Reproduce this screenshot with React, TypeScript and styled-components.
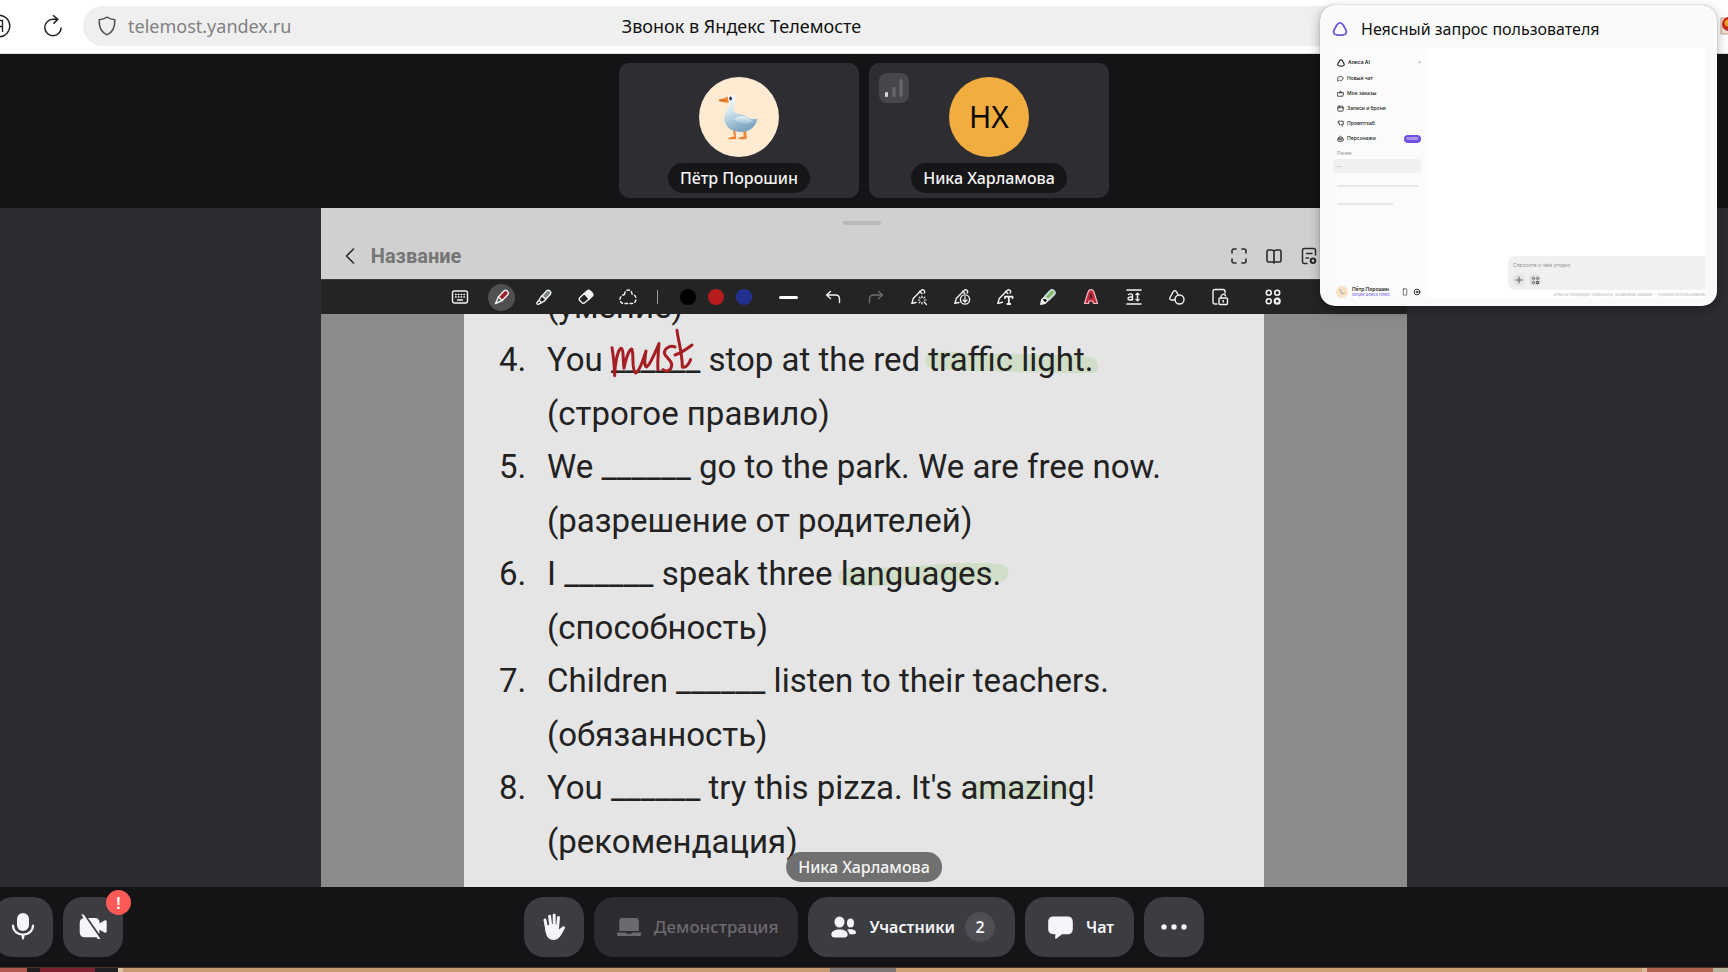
import React from "react";
import styled, { createGlobalStyle, css } from "styled-components";

const UI_FONT = '"Noto Sans", "Open Sans", sans-serif';
const DOC_FONT = 'Roboto, "Noto Sans", sans-serif';

const GlobalStyle = createGlobalStyle`
  *, *::before, *::after { box-sizing: border-box; }
  body { margin: 0; background: #141416; font-family: ${UI_FONT}; overflow: hidden; }
  button, input { font: inherit; color: inherit; }
  button { border: 0; padding: 0; background: none; cursor: pointer; }
  svg { display: block; flex: none; }
`;

/* ---------- Window ---------- */

const Window = styled.div`
  position: relative;
  display: flex;
  flex-direction: column;
  height: 100vh;
  overflow: hidden;
`;

/* ---------- Browser bar ---------- */

const BrowserBar = styled.header`
  display: flex;
  align-items: center;
  flex: none;
  height: 54px;
  padding-bottom: 2px;
  background: #fff;
  border-bottom: 1px solid #dcdcdc;
`;

const BrowserNav = styled.div`
  display: flex;
  align-items: center;
  gap: 30px;
  width: 83px;
  margin-left: -13px;
  padding-right: 7px;
  box-sizing: content-box;
`;

const BrowserButton = styled.button`
  display: grid;
  place-items: center;
  width: 24px;
  height: 24px;
`;

const Omnibox = styled.div`
  display: grid;
  grid-template-columns: 1fr auto 1fr;
  align-items: center;
  flex: 1;
  height: 40px;
  margin-left: 6px;
  margin-right: 320px;
  padding: 0 14px;
  border-radius: 20px;
  background: #efefef;
  font-size: 18px;
  line-height: 24px;
`;

const Address = styled.label`
  display: flex;
  align-items: center;
  gap: 11px;
  color: #808080;
`;

const AddressInput = styled.input`
  width: 200px;
  padding: 0;
  border: 0;
  outline: 0;
  background: none;
`;

const PageTitle = styled.span`
  color: #111;
`;

const ExtensionButton = styled.button`
  width: 8px;
  height: 18px;
  margin-left: auto;
  overflow: hidden;
`;

/* ---------- Participants ---------- */

const ParticipantStrip = styled.section`
  display: flex;
  justify-content: center;
  gap: 10px;
  flex: none;
  height: 154px;
  padding: 9px 0 10px;
  background: #141416;
`;

const Tile = styled.article`
  position: relative;
  display: flex;
  flex-direction: column;
  align-items: center;
  gap: 6px;
  width: 240px;
  padding-top: 14px;
  border-radius: 10px;
  background: #2e2d32;
`;

const Avatar = styled.div<{ $color: string }>`
  display: grid;
  place-items: center;
  width: 80px;
  height: 80px;
  border-radius: 50%;
  background: ${(p) => p.$color};
  color: #0c0a06;
  font-size: 30px;
  line-height: 40px;
`;

const namePill = css`
  height: 30px;
  padding: 0 12px;
  border-radius: 15px;
  color: #f4f4f4;
  font-size: 16px;
  font-weight: 500;
  line-height: 30px;
  white-space: nowrap;
`;

const TileName = styled.span`
  ${namePill}
  background: #161618;
`;

const SignalBadge = styled.span`
  position: absolute;
  top: 10px;
  left: 10px;
  display: grid;
  place-items: center;
  width: 30px;
  height: 30px;
  border-radius: 8px;
  background: #47464b;
`;

/* ---------- Stage ---------- */

const Stage = styled.main`
  position: relative;
  display: flex;
  justify-content: center;
  flex: 1;
  min-height: 0;
  background: #2e2c31;
`;

const SharedScreen = styled.section`
  display: flex;
  flex-direction: column;
  height: 100%;
  aspect-ratio: 16 / 10;
  background: #8b8b8b;
  font-family: ${DOC_FONT};
`;

const SpeakerName = styled.span`
  ${namePill}
  position: absolute;
  bottom: 5px;
  left: 50%;
  transform: translateX(-50%);
  background: #707070;
`;

const DocHeader = styled.header`
  display: flex;
  flex-direction: column;
  flex: none;
  height: 71px;
  padding: 13px 89px 0 20px;
  background: #d0d0d0;
`;

const DragHandle = styled.span`
  align-self: center;
  width: 38px;
  height: 4px;
  margin-left: 66px;
  border-radius: 2px;
  background: #b9b9b9;
`;

const DocHeaderRow = styled.div`
  display: flex;
  align-items: center;
  height: 30px;
  margin-top: 16px;
`;

const DocTitle = styled.h1`
  flex: 1;
  margin: 0 0 0 12px;
  color: #757575;
  font-size: 20px;
  font-weight: 700;
  line-height: 24px;
`;

const DocActions = styled.div`
  display: flex;
  gap: 17px;
`;

const DocButton = styled.button`
  display: grid;
  place-items: center;
  width: 18px;
  height: 24px;
  color: #2a2a2a;
`;

const DocToolbar = styled.div`
  display: flex;
  justify-content: center;
  align-items: center;
  flex: none;
  height: 35px;
  padding-left: 5px;
  background: #242424;
  border-top: 1px solid #3a3a3a;
  color: #f2f2f2;
`;

const ToolGroup = styled.div<{ $gap?: number; $before?: number }>`
  display: flex;
  align-items: center;
  gap: ${(p) => p.$gap ?? 16}px;
  margin-left: ${(p) => p.$before ?? 0}px;
  padding: 0 8px;
`;

const ToolButton = styled.button<{ $active?: boolean; $dim?: boolean }>`
  display: grid;
  place-items: center;
  width: 27px;
  height: 27px;
  border-radius: 50%;
  background: ${(p) => (p.$active ? "#505050" : "none")};
  opacity: ${(p) => (p.$dim ? 0.35 : 1)};
`;

const ToolDivider = styled.span`
  width: 1px;
  height: 14px;
  margin: 0 8px;
  background: #9a9a9a;
`;

const Swatch = styled.button<{ $color: string }>`
  width: 16px;
  height: 16px;
  border-radius: 50%;
  background: ${(p) => p.$color};
`;

const StrokeWidthButton = styled.button`
  display: grid;
  place-items: center;
  width: 45px;
  height: 27px;
  margin-left: 6px;

  &::before {
    content: "";
    width: 19px;
    height: 3px;
    border-radius: 2px;
    background: #fff;
  }
`;

const DocPage = styled.div`
  display: flex;
  flex-direction: column;
  justify-content: flex-end;
  align-self: center;
  flex: 1;
  width: 100%;
  max-width: 800px;
  min-height: 0;
  padding: 0 35px 19px;
  overflow: hidden;
  background: #e5e5e5;
  color: #222;
  font-size: 33px;
`;

const ExerciseList = styled.ol`
  margin: 0;
  padding: 0;
  list-style: none;
`;

const Exercise = styled.li`
  display: grid;
  grid-template-columns: 48px 1fr;
`;

const Sentence = styled.p`
  margin: 0;
  line-height: 54px;
  white-space: nowrap;
`;

const Hint = styled.p`
  grid-column: 2;
  margin: 0;
  line-height: 53px;
  white-space: nowrap;
`;

const Marked = styled.mark`
  position: relative;
  isolation: isolate;
  background: none;
  color: inherit;
`;

const MarkerStroke = styled.svg`
  position: absolute;
  z-index: -1;
  top: 7px;
  left: -4px;
  width: calc(100% + 12px);
  height: 26px;
`;

const Blank = styled.span`
  position: relative;
`;

const Handwriting = styled.svg`
  position: absolute;
  top: -13px;
  left: -3px;
  width: 88px;
  height: 52px;
`;

/* ---------- Call controls ---------- */

const ControlBar = styled.footer`
  display: grid;
  grid-template-columns: 1fr auto 1fr;
  align-items: center;
  flex: none;
  height: 80px;
  background: #141416;
`;

const ControlGroup = styled.div<{ $bleed?: boolean }>`
  display: flex;
  gap: 10px;
  margin-left: ${(p) => (p.$bleed ? "-7px" : "0")};
`;

const ControlButton = styled.button<{ $wide?: boolean }>`
  position: relative;
  display: flex;
  align-items: center;
  justify-content: center;
  gap: 13px;
  min-width: 60px;
  height: 60px;
  padding: ${(p) => (p.$wide ? "0 20px 0 23px" : "0")};
  border-radius: 20px;
  background: #3c3d41;
  color: #f4f5f8;
  font-size: 16px;
  font-weight: 600;
  line-height: 24px;

  &:disabled {
    background: #2d2b30;
    color: #6c6a71;
    font-weight: 500;
    font-size: 17px;
    cursor: default;
  }
`;

const Count = styled.span`
  display: grid;
  place-items: center;
  width: 30px;
  height: 30px;
  margin-left: -3px;
  border-radius: 50%;
  background: #4e4e54;
`;

const AlertBadge = styled.span`
  position: absolute;
  top: -7px;
  right: -8px;
  display: grid;
  place-items: center;
  width: 25px;
  height: 25px;
  border-radius: 50%;
  background: #fc5a59;
  color: #fff;
  font-size: 16px;
`;

/* ---------- Desktop strip below the window ---------- */

const Desktop = styled.div`
  display: flex;
  flex: none;
  height: 5px;
  border-top: 1px solid #4a352b;
`;

const DesktopPart = styled.span<{ $color: string; $width?: number }>`
  flex: ${(p) => (p.$width ? `0 0 ${p.$width}px` : "1")};
  background: ${(p) => p.$color};
`;

/* ---------- Tab preview ---------- */

const TabPreview = styled.aside`
  position: absolute;
  top: 5px;
  right: 11px;
  display: flex;
  flex-direction: column;
  width: 397px;
  height: 301px;
  padding: 0 12px 8px 10px;
  border-radius: 15px;
  background: #fafafa;
  box-shadow: 0 0 1px rgba(0, 0, 0, 0.5), 0 4px 12px rgba(0, 0, 0, 0.3);
`;

const PreviewTitle = styled.h2`
  display: flex;
  align-items: center;
  gap: 13px;
  height: 43px;
  margin: 0;
  padding: 4px 2px 0;
  color: #111;
  font-size: 16px;
  font-weight: 400;
  line-height: 24px;
`;

const Preview = styled.div`
  display: flex;
  flex: 1;
  min-height: 0;
  font-family: Inter, ${UI_FONT};
  font-size: 5px;
  line-height: 7px;
  color: #222;
`;

const PreviewSidebar = styled.nav`
  display: flex;
  flex-direction: column;
  width: 98px;
  padding: 11px 7px 0 3px;
  background: #fbfbfb;
`;

const PreviewRow = styled.a<{ $head?: boolean }>`
  display: flex;
  align-items: center;
  gap: 3px;
  height: 7px;
  margin-bottom: ${(p) => (p.$head ? 9 : 8)}px;
  padding-left: 4px;
  color: #222;
  font-weight: ${(p) => (p.$head ? 600 : 500)};
  text-decoration: none;
`;

const CollapseMark = styled.span`
  margin-left: auto;
  color: #999;
  font-weight: 400;
`;

const PreviewBadge = styled.span`
  width: 17px;
  height: 8px;
  margin-left: auto;
  border-radius: 4px;
  background: #7350e0;
  color: #e6defc;
  font-size: 4px;
  line-height: 8px;
  text-align: center;
`;

const PreviewSection = styled.span`
  padding-left: 4px;
  color: #999;
`;

const PreviewChat = styled.a`
  height: 14px;
  margin: 2px 0 12px;
  padding: 3px 4px;
  border-radius: 3px;
  background: #f0f0f0;
  color: #888;
  text-decoration: none;
`;

const Skeleton = styled.span<{ $width: number }>`
  width: ${(p) => p.$width}px;
  height: 2px;
  margin: 0 0 16px 4px;
  background: #e8e8e8;
`;

const PreviewProfile = styled.div`
  display: flex;
  align-items: center;
  gap: 4px;
  margin-top: auto;
  padding-left: 3px;
`;

const PreviewAvatar = styled.span`
  display: grid;
  place-items: center;
  width: 12px;
  height: 12px;
  border-radius: 50%;
  background: #fbe2c2;
`;

const PreviewUser = styled.span`
  display: flex;
  flex-direction: column;
  flex: 1;
  font-weight: 600;
  line-height: 6px;
  white-space: nowrap;
`;

const PreviewPlan = styled.span`
  color: #7f6fe0;
  font-size: 4px;
  font-weight: 500;
`;

const PreviewMain = styled.div`
  display: flex;
  flex-direction: column;
  justify-content: flex-end;
  align-items: flex-end;
  flex: 1;
  background: #fff;
`;

const Composer = styled.div`
  display: flex;
  flex-direction: column;
  gap: 5px;
  width: 197px;
  height: 34px;
  padding: 5px 3px 0 5px;
  border-radius: 7px 0 0 7px;
  background: #f0f0f0;
`;

const ComposerInput = styled.input`
  width: 120px;
  height: 8px;
  padding: 0;
  border: 0;
  background: none;

  &::placeholder {
    color: #909090;
  }
`;

const ComposerTools = styled.div`
  display: flex;
  gap: 4px;
`;

const ComposerButton = styled.button`
  display: grid;
  place-items: center;
  width: 12px;
  height: 12px;
  border-radius: 50%;
  background: #e2e2e2;
  color: #555;
`;

const Disclaimer = styled.small`
  height: 8px;
  padding-top: 2px;
  color: #b5b5b5;
  font-size: 4px;
  line-height: 6px;
  white-space: nowrap;
`;

/* ---------- Drawings ---------- */

type IconProps = { size?: number; children: React.ReactNode; width?: number };

const LineIcon = ({ size = 18, width = 1.4, children }: IconProps) => (
  <svg
    width={size}
    height={size}
    viewBox="0 0 18 18"
    fill="none"
    stroke="currentColor"
    strokeWidth={width}
    strokeLinecap="round"
    strokeLinejoin="round"
    aria-hidden="true"
  >
    {children}
  </svg>
);

const Goose = () => (
  <svg width="42" height="46" viewBox="0 0 42 46" aria-hidden="true">
    <defs>
      <linearGradient id="gooseBody" x1="0" y1="0" x2="0.3" y2="1">
        <stop offset="0" stopColor="#fff" />
        <stop offset="0.45" stopColor="#d3e6f2" />
        <stop offset="1" stopColor="#7fa6c0" />
      </linearGradient>
      <linearGradient id="gooseWing" x1="0" y1="0" x2="0" y2="1">
        <stop offset="0" stopColor="#eaf5fb" />
        <stop offset="1" stopColor="#8fb6cf" />
      </linearGradient>
    </defs>
    <path d="M15 36l1 6.500-5.500 1.200c-.8 1 .2 1.500 1 1.500H17c1.200 0 1.200-1 1-2l-.6-7z" fill="#ee8236" />
    <path d="M25 36l.8 6.500-5.200 1.200c-.8 1 .2 1.500 1 1.500h6c1.200 0 1.200-1 1-2l-.4-7z" fill="#ee8236" />
    <path d="M9.500 2.500C12-.2 17.500.6 17.500 6.500c0 4-2.500 6.500-1.500 10.500.8 3 6.500 2.500 11.500 5 4 2 7.500 4.500 12 2.500C38.500 32 32 38 23.500 38 13 38 7 32.500 6.500 25.500 6 18 12.500 13.500 11.500 8z" fill="url(#gooseBody)" />
    <path d="M16.500 25c4-4.500 13-3 18.500 2-5 5-15.500 5.500-18.500-2z" fill="url(#gooseWing)" />
    <path d="M17 26.500c3 6 12 6 17.500 1" fill="none" stroke="#7fa8c4" strokeWidth="0.8" />
    <path d="M9.500 2.500C7.500 4 4.500 4.500 1 5.500c-.8.8 0 1.800 1 2 3 .8 6 1.500 8.800 1z" fill="#ef8a35" />
    <path d="M1.500 6.500h7" stroke="#b95a1c" strokeWidth="0.7" />
    <ellipse cx="12.600" cy="4.600" rx="1.300" ry="2" fill="#26303a" />
  </svg>
);

const Signal = () => (
  <svg width="20" height="20" viewBox="0 0 20 20" aria-hidden="true">
    <rect x="1" y="14" width="3" height="5" rx="1" fill="#d6d6d8" />
    <rect x="8.500" y="9" width="3" height="10" rx="1" fill="#68676c" />
    <rect x="15.500" y="1" width="3" height="18" rx="1" fill="#68676c" />
  </svg>
);

const Alice = ({ size, color, width = 2 }: { size: number; color: string; width?: number }) => (
  <svg width={size} height={size} viewBox="0 0 18 18" fill="none" stroke={color} strokeWidth={width} aria-hidden="true">
    <path d="M9 2c1.700 0 2.600.9 3.600 2.500l2.700 4.900c1.900 3.600.6 6-2.600 6.300-2.400.3-5 .3-7.400 0-3.200-.3-4.500-2.700-2.600-6.300l2.700-4.900C6.400 2.900 7.300 2 9 2z" />
  </svg>
);

const MicIcon = () => (
  <svg width="24" height="30" viewBox="0 0 24 30" fill="none" aria-hidden="true">
    <rect x="6" y="1" width="12" height="18" rx="6" fill="currentColor" />
    <path d="M2 13.500C2 19 6.500 22.500 12 22.500S22 19 22 13.500" stroke="currentColor" strokeWidth="2.200" strokeLinecap="round" />
    <path d="M10 22h4l-1 4.500-1 1.500-1-1.500z" fill="currentColor" />
  </svg>
);

const CameraOffIcon = () => (
  <svg width="30" height="28" viewBox="0 0 30 28" aria-hidden="true">
    <path d="M7 5h10c3 0 4.500 1.500 4.500 4.500v.8l5-2.800c1.200-.6 2.200-.1 2.200 1.200v9.500c0 1.300-1 1.800-2.200 1.200l-5-2.700v1c0 4-1.500 6.500-4.500 6.500H7c-3.500 0-5.300-1.700-5.300-5.200V10.200C1.700 6.700 3.500 5 7 5z" fill="currentColor" />
    <path d="M6.200 1.700L23.500 26.500" stroke="#3c3d41" strokeWidth="2.600" />
    <path d="M3.200 1.500h2.500L22.500 26h-2.800z" fill="currentColor" />
  </svg>
);

const HandIcon = () => (
  <svg width="24" height="28" viewBox="0 0 24 28" fill="none" stroke="currentColor" strokeLinecap="round" aria-hidden="true">
    <path d="M3 7l2 11M7.600 3.200L9 15M12.200 2v12M16.500 4.500L15.500 15" strokeWidth="3" />
    <path d="M3.200 13c0 9 2.600 14 8.300 14 4.500 0 6.500-3 8.500-6.500l3-5.500c.6-1.500-1.200-2.200-2.400-1.500L17 16.500V12l-7-1z" fill="currentColor" stroke="none" />
  </svg>
);

const LaptopIcon = () => (
  <svg width="24" height="20" viewBox="0 0 24 20" fill="currentColor" aria-hidden="true">
    <path d="M5 1h14c1.800 0 2.800 1 2.800 2.800V14H2.200V3.800C2.200 2 3.200 1 5 1zM0 15.500h8.500l1.500 1.200h4l1.500-1.200H24v2c0 1-.6 1.500-1.500 1.500h-21C.6 19 0 18.500 0 17.500z" />
  </svg>
);

const PeopleIcon = () => (
  <svg width="25" height="22" viewBox="0 0 25 22" fill="currentColor" aria-hidden="true">
    <ellipse cx="8.500" cy="6" rx="5" ry="5.500" />
    <path d="M8.500 13.500c5 0 8.200 2 8.200 5 0 2-1.600 3-3.200 3h-10c-1.700 0-3.200-1-3.200-3 0-3 3.200-5 8.200-5z" />
    <ellipse cx="19.500" cy="7" rx="3.500" ry="4.500" />
    <path d="M16 13.700c4.500-1.200 9 .2 9 2.800 0 1-.8 1.700-2 1.700h-4.500c-.5-2-1.200-3.300-2.500-4.500z" />
  </svg>
);

const ChatIcon = () => (
  <svg width="25" height="23" viewBox="0 0 25 23" fill="currentColor" aria-hidden="true">
    <path d="M6 .5h13c4 0 5.800 1.800 5.800 5.500v6.500c0 4-1.800 5.800-5.800 5.800h-5l-5.500 4.200c-.9.500-1.500.1-1.400-.8l.4-3.500H6c-4 0-5.800-1.700-5.800-5.700V6C.2 2.300 2 .5 6 .5z" />
  </svg>
);

const MoreIcon = () => (
  <svg width="26" height="6" viewBox="0 0 26 6" fill="currentColor" aria-hidden="true">
    <circle cx="3" cy="3" r="2.700" />
    <circle cx="13" cy="3" r="2.700" />
    <circle cx="23" cy="3" r="2.700" />
  </svg>
);

const penOutline = "M11.800 5.500L9.500 3.200M2 15.200l1.200-4.600 8-8.200c.9-.9 2-.9 2.900 0 .8.900.8 1.800 0 2.700";

const Tools: { label: string; icon: React.ReactNode; active?: boolean }[] = [
  {
    label: "Клавиатура",
    icon: (
      <LineIcon>
        <rect x="1.500" y="3" width="15" height="12" rx="2" />
        <path d="M4.500 6.500h9M4.500 9h9" strokeDasharray="0.600 2.200" strokeWidth="1.500" />
        <path d="M6.500 12h5" />
      </LineIcon>
    ),
  },
  {
    label: "Ручка",
    active: true,
    icon: (
      <LineIcon>
        <path d="M5.500 8.800l5.700-6c1.800-1.600 5.400 1.300 3.700 3.700l-5.700 6z" fill="#9c1f30" />
        <path d="M5.500 8.800L2.500 15.500l6.700-3" />
      </LineIcon>
    ),
  },
  {
    label: "Маркер",
    icon: (
      <LineIcon>
        <path d="M7 8l4.700-5.300c2-1.500 5.200 1 3.900 3.300L10.800 11.300z" fill="#7c857c" />
        <path d="M7 8c-2 1-2 3-3 4.200l2.600 2.500c1.500-1 3.500-1.200 4.200-3.400M4 12.200L2 14.500c-.5 1 .2 2 1.300 1.800l3.300-1.600" />
      </LineIcon>
    ),
  },
  {
    label: "Ластик",
    icon: (
      <LineIcon>
        <path d="M7.200 5.500L10 3c1-.9 2.200-.9 3.200 0l2 2c.9 1 .9 2.200 0 3.200l-3 2.800z" fill="currentColor" />
        <path d="M7.200 5.500L3 9.500c-1 1-1 2.200 0 3.200l1.800 1.800c.9.900 2.200.9 3.200 0l4.200-3.500" />
      </LineIcon>
    ),
  },
  {
    label: "Лассо",
    icon: (
      <LineIcon>
        <path
          d="M5.500 6.500C5.700 3.500 7.300 2 9.300 2s3.500 1.500 3.700 4c2.500.5 4 2.300 4 4.800 0 2.600-1.700 4.700-4.500 4.700H5C2.500 15.500 1 13.700 1 11.500c0-2.500 2-4.500 4.500-5z"
          strokeDasharray="2.600 2.400"
        />
      </LineIcon>
    ),
  },
];

const EditTools: { label: string; icon: React.ReactNode; dim?: boolean }[] = [
  { label: "Отменить", icon: <LineIcon><path d="M6.500 3.500L2.500 7l4 3.500M2.500 7h9c2.500 0 4 1.500 4 4v3.500" /></LineIcon> },
  { label: "Повторить", dim: true, icon: <LineIcon><path d="M11.500 3.500l4 3.500-4 3.500M15.500 7h-9c-2.500 0-4 1.500-4 4v3.500" /></LineIcon> },
  {
    label: "Лазерная ручка",
    icon: <LineIcon><path d={penOutline} /><path d="M2 15.200l4-.7" /><path d="M12 8v1.500M12 14.500V16M8.200 12h1.500M14.500 12H16M9.200 9.200l1 1M14 14l2.500 2.500M14.800 9.200l-1 1M10 14l-.8.8" strokeWidth="1.200" /></LineIcon>,
  },
  {
    label: "Прямая ручка",
    icon: <LineIcon><path d={penOutline} /><path d="M2 15.200l4-.7" /><circle cx="12" cy="11.500" r="4.600" fill="#242424" /><path d="M12 8.500v5.500M10 12l2 2 2-2" strokeWidth="1.200" /></LineIcon>,
  },
  {
    label: "Ручка в текст",
    icon: <LineIcon><path d={penOutline} /><path d="M2 15.200l4.500-1" /><path d="M9 10V8.700h7.500V10M12.800 8.700v7.300M11.300 16h3" strokeWidth="1.800" /></LineIcon>,
  },
  {
    label: "Цветной маркер",
    icon: (
      <LineIcon>
        <path d="M6 8L11.500 2.200c2.200-1.700 5.800 1.600 4.200 4L10 12z" fill="#a9cf9a" stroke="#cfe0e8" />
        <path d="M8.500 9l5-5" stroke="#7fb56b" strokeWidth="2.400" />
        <path d="M5.500 9l-2.800 3L6 15.300 9 12.500z" fill="#111" />
        <path d="M2.700 12l-.9 4.200L6 15.300z" fill="currentColor" />
      </LineIcon>
    ),
  },
  {
    label: "Цвет надписи",
    icon: (
      <LineIcon>
        <path d="M2.500 15.500L6 4.200C6.600 2.300 7.500 1.600 9 1.600s2.400.7 3 2.600l3.500 11.300h-4l-.7-2.500H7.200l-.7 2.500z" fill="#c22a3b" stroke="#f3b9bf" strokeWidth="1.200" />
        <path d="M8 9.500L9 5.800l1 3.700z" fill="#242424" stroke="#242424" strokeWidth="0.500" />
      </LineIcon>
    ),
  },
  {
    label: "Высота строки",
    icon: (
      <LineIcon>
        <path d="M2 2h14M2 16h14" strokeWidth="1.600" />
        <path d="M3.500 6.500c1.500-1 4-.8 4 1V12M7.500 9C5 8.800 3 9 3 10.600S5.800 12.600 7.500 11M12.500 5.500v7M11 6.500l1.500-1.300L14 6.500M11 11.500l1.500 1.300 1.500-1.300" />
      </LineIcon>
    ),
  },
  {
    label: "Фигуры",
    icon: <LineIcon><path d="M7 12H3.500c-1.500 0-2.200-1.200-1.500-2.500L5.300 3.600c.8-1.300 2.200-1.300 3 0L10 6.500" /><circle cx="11.500" cy="11.500" r="4.500" /></LineIcon>,
  },
  {
    label: "Блокировка холста",
    icon: <LineIcon><path d="M6 16H4c-1.300 0-2-.7-2-2V3.500c0-1.300.7-2 2-2h8c1.300 0 2 .7 2 2V5" /><rect x="8" y="10" width="8.500" height="6.500" rx="1" /><path d="M10 10V8.500c0-2.500 4-3 4.500-.7M12.200 12.500v1.500" /></LineIcon>,
  },
];

const GridIcon = ({ size = 18 }: { size?: number }) => (
  <LineIcon size={size} width={1.6}>
    <circle cx="4.800" cy="4.800" r="2.500" />
    <circle cx="13.200" cy="4.800" r="2.500" />
    <circle cx="4.800" cy="13.200" r="2.500" />
    <circle cx="13.200" cy="13.200" r="2.500" strokeWidth="2.200" />
  </LineIcon>
);

const GreenMarker = ({ d }: { d: string }) => (
  <MarkerStroke viewBox="0 0 170 26" preserveAspectRatio="none" aria-hidden="true">
    <path d={d} fill="none" stroke="#d0dec8" strokeWidth="18" strokeLinecap="round" />
  </MarkerStroke>
);

const Must = () => (
  <Handwriting viewBox="895 380 264 156" role="img" aria-label="must">
    <g fill="none" stroke="#a41e23" strokeWidth="9" strokeLinecap="round" strokeLinejoin="round">
      <path d="M907 442c5 28 7 56 8 84 1-36 8-76 19-82 8 0 6 40 9 60 4-24 14-56 23-58 8 10-2 64 12 72 14-6 24-46 31-66-5 30-5 48 2 48 12-8 26-46 37-70-3 34-5 60-3 78" />
      <path d="M1096 440c-14-6-32 4-32 18 2 14 24 20 22 38-2 16-16 20-26 12" />
      <path d="M1102 390c4 32 16 70 16 110 10 4 20-10 25-22M1096 464c18-6 38-20 51-30" />
    </g>
  </Handwriting>
);

const previewItems: { label: string; icon: React.ReactNode; badge?: string }[] = [
  { label: "Новый чат", icon: <LineIcon size={7} width={2}><path d="M4 15l-2 1V7c0-4 14-4 14 1s-4 6-8 6" /></LineIcon> },
  { label: "Мои заказы", icon: <LineIcon size={7} width={2}><path d="M1 7h16l-2 9H3zM6 7l3-5 3 5" /></LineIcon> },
  { label: "Записи и брони", icon: <LineIcon size={7} width={2}><rect x="2" y="3" width="14" height="13" rx="3" /><path d="M2 7h14" /></LineIcon> },
  { label: "Промптхаб", icon: <LineIcon size={7} width={2}><path d="M8 3H3v5h3v5M10 3h6v9h-6M12 14l3 3" /></LineIcon> },
  { label: "Персонажи", badge: "новое", icon: <LineIcon size={7} width={2}><rect x="2" y="8" width="14" height="8" rx="2" /><path d="M5 8c0-7 8-7 8 0M5 12h8" /></LineIcon> },
];

const exercises = [
  { n: 5, before: "We ", after: " go to the park. We are free now.", hint: "(разрешение от родителей)" },
  { n: 6, before: "I ", after: " speak three ", marked: "languages.", d: "M10 16C60 18 110 8 160 12", hint: "(способность)" },
  { n: 7, before: "Children ", after: " listen to their teachers.", hint: "(обязанность)" },
  { n: 8, before: "You ", after: " try this pizza. It's ", marked: "amazing", d: "M28 15L130 15", tail: "!", hint: "(рекомендация)" },
];

export default function App() {
  return (
    <>
      <GlobalStyle />
      <Window>
        <BrowserBar>
          <BrowserNav>
            <BrowserButton aria-label="Яндекс">
              <svg width="24" height="24" viewBox="0 0 24 24" fill="none" stroke="#222" strokeWidth="1.400">
                <circle cx="12" cy="12" r="10.800" />
                <path d="M15.500 18V6.500h-2c-4 0-4 6 0 6h2" />
              </svg>
            </BrowserButton>
            <BrowserButton aria-label="Обновить">
              <svg width="22" height="24" viewBox="0 0 22 24" fill="none" stroke="#222" strokeWidth="1.500">
                <path d="M19.200 13.500A8.200 8.200 0 1 1 11 5.300h4.500M11 1.200l4.800 4.200-4.300 4.200" />
              </svg>
            </BrowserButton>
          </BrowserNav>
          <Omnibox>
            <Address>
              <svg width="20" height="20" viewBox="0 0 20 20" fill="none" stroke="#555" strokeWidth="1.600" strokeLinejoin="round">
                <path d="M10 1.200c2.300 1.500 4.800 2.300 7.800 2.500.3 6.500-1 12-7.800 15.200C3.200 15.700 1.900 10.200 2.200 3.700c3-.2 5.500-1 7.800-2.500z" />
              </svg>
              <AddressInput aria-label="Адрес" defaultValue="telemost.yandex.ru" />
            </Address>
            <PageTitle>Звонок в Яндекс Телемосте</PageTitle>
          </Omnibox>
          <ExtensionButton aria-label="Расширение">
            <svg width="18" height="18" viewBox="0 0 18 18">
              <path d="M1 1h17v16H1z" fill="#eee0d2" stroke="#c9a58d" />
              <circle cx="9" cy="7" r="7" fill="#c9251c" />
              <circle cx="8" cy="6" r="3.500" fill="#f0a32e" />
            </svg>
          </ExtensionButton>
        </BrowserBar>

        <ParticipantStrip aria-label="Участники звонка">
          <Tile>
            <Avatar $color="#feebd2"><Goose /></Avatar>
            <TileName>Пётр Порошин</TileName>
          </Tile>
          <Tile>
            <SignalBadge><Signal /></SignalBadge>
            <Avatar $color="#f2ad40">НХ</Avatar>
            <TileName>Ника Харламова</TileName>
          </Tile>
        </ParticipantStrip>

        <Stage>
          <SharedScreen>
            <DocHeader>
              <DragHandle />
              <DocHeaderRow>
                <DocButton aria-label="Назад"><LineIcon width={1.6}><path d="M12.500 2L5.500 9l7 7" /></LineIcon></DocButton>
                <DocTitle>Название</DocTitle>
                <DocActions>
                  <DocButton aria-label="Во весь экран">
                    <LineIcon width={1.6}><path d="M2 6V4c0-1.300.7-2 2-2h2M12 2h2c1.300 0 2 .7 2 2v2M16 12v2c0 1.300-.7 2-2 2h-2M6 16H4c-1.300 0-2-.7-2-2v-2" /></LineIcon>
                  </DocButton>
                  <DocButton aria-label="Режим чтения">
                    <LineIcon width={1.6}><path d="M9 4.500C8.500 3 7.500 3 6.500 3H3.500C2.500 3 2 3.500 2 4.500v9c0 1 .5 1.500 1.500 1.500h4c.8 0 1.200.3 1.500 1 .3-.7.700-1 1.500-1h4c1 0 1.500-.5 1.500-1.500v-9c0-1-.5-1.500-1.500-1.500h-3C10.500 3 9.500 3 9 4.500zM9 4.500V15" /></LineIcon>
                  </DocButton>
                  <DocButton aria-label="Настройки страницы">
                    <LineIcon width={1.5}><path d="M7 16.500H4.500c-1.300 0-2-.7-2-2v-11c0-1.300.7-2 2-2h9c1.300 0 2 .7 2 2V8M6.500 6.500h5.500M6 11h2.500" /><circle cx="13" cy="13.800" r="2.300" strokeWidth="2" /></LineIcon>
                  </DocButton>
                </DocActions>
              </DocHeaderRow>
            </DocHeader>

            <DocToolbar role="toolbar" aria-label="Инструменты">
              <ToolGroup $gap={15}>
                {Tools.map((t) => (
                  <ToolButton key={t.label} aria-label={t.label} $active={t.active}>{t.icon}</ToolButton>
                ))}
              </ToolGroup>
              <ToolDivider />
              <ToolGroup $gap={12} $before={6}>
                <Swatch $color="#000" aria-label="Чёрный" />
                <Swatch $color="#b81b1c" aria-label="Красный" />
                <Swatch $color="#20308f" aria-label="Синий" />
              </ToolGroup>
              <StrokeWidthButton aria-label="Толщина линии" />
              <ToolGroup>
                {EditTools.map((t) => (
                  <ToolButton key={t.label} aria-label={t.label} $dim={t.dim}>{t.icon}</ToolButton>
                ))}
              </ToolGroup>
              <ToolGroup $before={10}>
                <ToolButton aria-label="Все инструменты"><GridIcon /></ToolButton>
              </ToolGroup>
            </DocToolbar>

            <DocPage>
              <ExerciseList>
                <Exercise>
                  <Hint>(умение)</Hint>
                </Exercise>
                <Exercise>
                  <Sentence>4.</Sentence>
                  <Sentence>
                    You <Blank>______<Must /></Blank> stop at the red{" "}
                    <Marked>traffic light.<GreenMarker d="M10 13C60 17 110 15 158 19" /></Marked>
                  </Sentence>
                  <Hint>(строгое правило)</Hint>
                </Exercise>
                {exercises.map((e) => (
                  <Exercise key={e.n}>
                    <Sentence>{e.n}.</Sentence>
                    <Sentence>
                      {e.before}
                      <Blank>______</Blank>
                      {e.after}
                      {e.marked && <Marked>{e.marked}<GreenMarker d={e.d!} /></Marked>}
                      {e.tail}
                    </Sentence>
                    <Hint>{e.hint}</Hint>
                  </Exercise>
                ))}
              </ExerciseList>
            </DocPage>
          </SharedScreen>
          <SpeakerName>Ника Харламова</SpeakerName>
        </Stage>

        <ControlBar>
          <ControlGroup $bleed>
            <ControlButton aria-label="Микрофон"><MicIcon /></ControlButton>
            <ControlButton aria-label="Камера">
              <CameraOffIcon />
              <AlertBadge>!</AlertBadge>
            </ControlButton>
          </ControlGroup>
          <ControlGroup>
            <ControlButton aria-label="Поднять руку"><HandIcon /></ControlButton>
            <ControlButton $wide disabled><LaptopIcon />Демонстрация</ControlButton>
            <ControlButton $wide><PeopleIcon />Участники<Count>2</Count></ControlButton>
            <ControlButton $wide><ChatIcon />Чат</ControlButton>
            <ControlButton aria-label="Ещё"><MoreIcon /></ControlButton>
          </ControlGroup>
        </ControlBar>

        <Desktop>
          <DesktopPart $color="#b0594e" $width={27} />
          <DesktopPart $color="#241d20" $width={13} />
          <DesktopPart $color="#7c2230" $width={55} />
          <DesktopPart $color="#221f24" $width={23} />
          <DesktopPart $color="#dcc1a4" $width={5} />
          <DesktopPart $color="#c69a73" $width={707} />
          <DesktopPart $color="#7e7672" $width={66} />
          <DesktopPart $color="#cd9f74" />
          <DesktopPart $color="#d9b99a" $width={5} />
          <DesktopPart $color="#b1654f" $width={66} />
          <DesktopPart $color="#b9b59f" $width={15} />
        </Desktop>

        <TabPreview>
          <PreviewTitle>
            <Alice size={16} color="#6f55d6" />
            Неясный запрос пользователя
          </PreviewTitle>
          <Preview>
            <PreviewSidebar>
              <PreviewRow href="#" $head>
                <Alice size={8} color="#222" width={2.6} />
                Алиса AI
                <CollapseMark>«</CollapseMark>
              </PreviewRow>
              {previewItems.map((i) => (
                <PreviewRow href="#" key={i.label}>
                  {i.icon}
                  {i.label}
                  {i.badge && <PreviewBadge>{i.badge}</PreviewBadge>}
                </PreviewRow>
              ))}
              <PreviewSection>Ранее</PreviewSection>
              <PreviewChat href="#">…</PreviewChat>
              <Skeleton $width={81} />
              <Skeleton $width={56} />
              <PreviewProfile>
                <PreviewAvatar>
                  <LineIcon size={8} width={2}><path d="M4 4l3 1v6c2 3 7 2 8-1" stroke="#8aa4b2" /></LineIcon>
                </PreviewAvatar>
                <PreviewUser>
                  Пётр Порошин
                  <PreviewPlan>Опция Алиса Плюс</PreviewPlan>
                </PreviewUser>
                <LineIcon size={8}><rect x="5" y="2" width="8" height="14" rx="1" /></LineIcon>
                <LineIcon size={8} width={2}><circle cx="9" cy="9" r="6.500" /><circle cx="9" cy="9" r="2" /></LineIcon>
              </PreviewProfile>
            </PreviewSidebar>
            <PreviewMain>
              <Composer>
                <ComposerInput aria-label="Сообщение" placeholder="Спросите о чём угодно" />
                <ComposerTools>
                  <ComposerButton aria-label="Добавить"><LineIcon size={8} width={2}><path d="M9 2v14M2 9h14" /></LineIcon></ComposerButton>
                  <ComposerButton aria-label="Режимы"><GridIcon size={9} /></ComposerButton>
                </ComposerTools>
              </Composer>
              <Disclaimer>Ответы генерирует нейросеть, возможны ошибки — условия использования</Disclaimer>
            </PreviewMain>
          </Preview>
        </TabPreview>
      </Window>
    </>
  );
}
